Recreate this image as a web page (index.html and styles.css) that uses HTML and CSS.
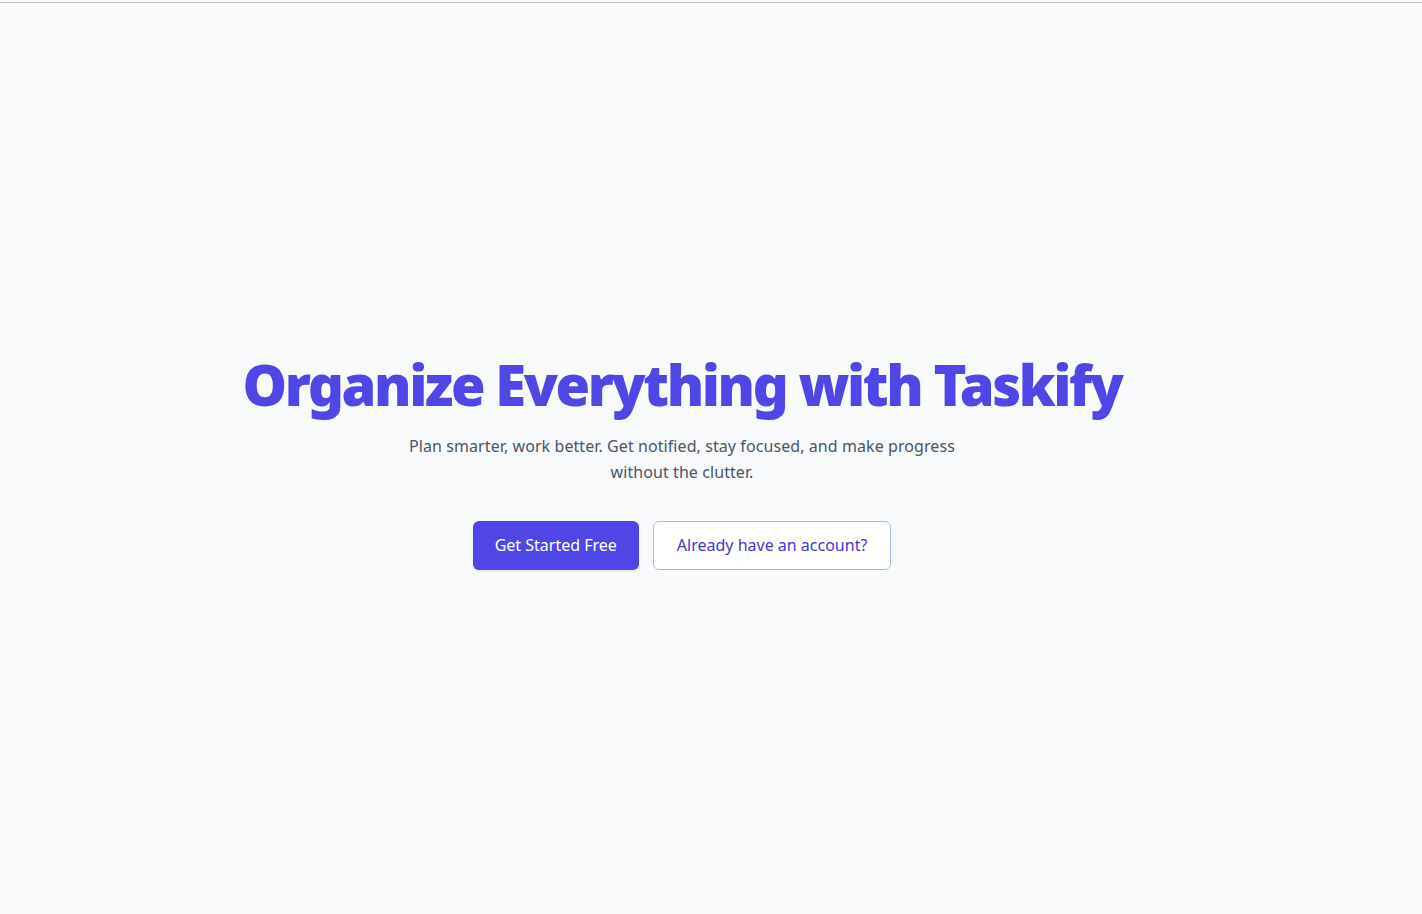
FILE: index.html
```html
<!DOCTYPE html>
<html lang="en">
<head>
<meta charset="utf-8">
<title>Taskify</title>
<link rel="stylesheet" href="styles.css">
</head>
<body>
<div class="topline"></div>
<main class="hero">
  <h1 class="title">Organize Everything with Taskify</h1>
  <p class="subtitle">Plan smarter, work better. Get notified, stay focused, and make progress without the clutter.</p>
  <div class="actions">
    <a class="btn btn-primary" href="#">Get Started Free</a>
    <a class="btn btn-outline" href="#">Already have an account?</a>
  </div>
</main>
</body>
</html>
```

FILE: styles.css
```css
* { box-sizing: border-box; }
html, body { margin: 0; padding: 0; }
body {
  background: #f8fafc;
  font-family: "Noto Sans", "Open Sans", sans-serif;
  min-height: 100vh;
}
.topline {
  height: 3px;
  border-bottom: 1px solid #bdbdc2;
  background: #f8fafc;
}
.hero {
  min-height: calc(100vh - 3px);
  display: flex;
  flex-direction: column;
  align-items: center;
  justify-content: center;
  text-align: center;
  padding: 5px 74px 0 16px;
}
.title {
  margin: 0;
  font-size: 56px;
  line-height: 1.15;
  font-weight: 900;
  letter-spacing: -2.4px;
  color: #4f46e5;
}
.subtitle {
  margin: 16px 0 0;
  max-width: 576px;
  font-size: 16px;
  line-height: 26px;
  letter-spacing: 0.08px;
  color: #4b5563;
}
.actions {
  margin-top: 36px;
  display: flex;
  gap: 14px;
}
.btn {
  display: inline-flex;
  align-items: center;
  justify-content: center;
  height: 49px;
  padding: 0 22px;
  border-radius: 6px;
  font-size: 16px;
  text-decoration: none;
}
.btn-primary {
  background: #4f46e5;
  color: #ffffff;
  box-shadow: 0 1px 3px rgba(0,0,0,0.12);
}
.btn-outline {
  padding: 0 23px;
  background: #ffffff;
  color: #4338ca;
  border: 1px solid #a5b4fc;
}
```
